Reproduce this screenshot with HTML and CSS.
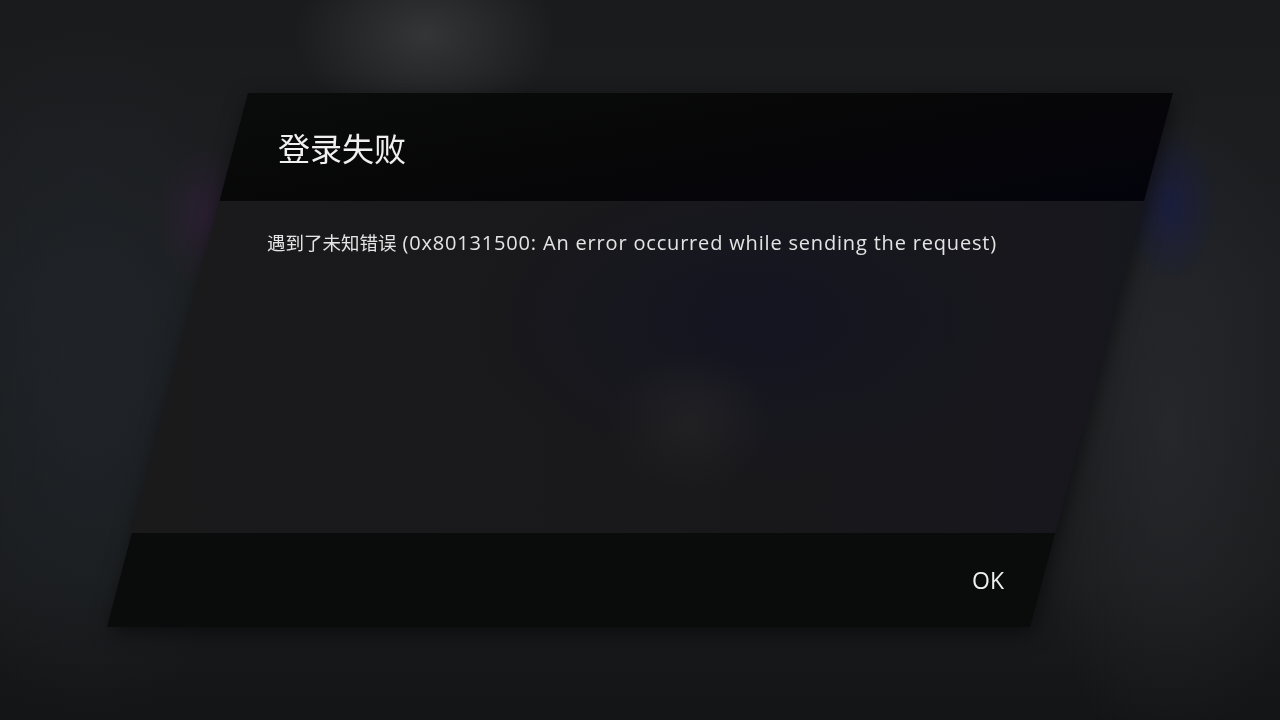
FILE: index.html
```html
<!DOCTYPE html>
<html lang="zh-CN">
<head>
    <meta charset="UTF-8">
    <meta name="viewport" content="width=device-width, initial-scale=1.0">
    <title>登录失败</title>
    <link rel="stylesheet" href="styles.css">
</head>
<body>
    <div class="scene">
        <!-- Error dialog -->
        <div class="dialog-wrap">
            <div class="dialog">
                <div class="dialog-header">
                    <h1 class="dialog-title">登录失败</h1>
                </div>
                <div class="dialog-body">
                    <p class="dialog-message">遇到了未知错误<span class="error-detail"> (0x80131500: An error occurred while sending the request)</span></p>
                </div>
                <div class="dialog-footer">
                    <button class="dialog-button">OK</button>
                </div>
            </div>
        </div>
    </div>
</body>
</html>
```

FILE: styles.css
```css
body {
    margin: 0;
    font-family: "Open Sans", "Noto Sans CJK SC", sans-serif;
    color: #ececec;
    background-color: #1a1c1f;
}

.scene {
    width: 1280px;
    height: 720px;
    overflow: hidden;
    background:
        radial-gradient(ellipse 130px 90px at 425px 35px, rgba(70, 70, 70, 0.6), rgba(70, 70, 70, 0) 100%),
        radial-gradient(ellipse 50px 70px at 205px 215px, rgba(60, 30, 70, 0.4), rgba(60, 30, 70, 0) 100%),
        radial-gradient(ellipse 50px 80px at 1170px 205px, rgba(20, 25, 90, 0.45), rgba(20, 25, 90, 0) 100%),
        radial-gradient(ellipse 140px 340px at 1170px 430px, rgba(46, 48, 52, 0.5), rgba(46, 48, 52, 0) 100%),
        radial-gradient(ellipse 160px 360px at 90px 380px, rgba(34, 39, 44, 0.6), rgba(34, 39, 44, 0) 100%),
        linear-gradient(180deg, #1a1b1d 0%, #1d1f22 40%, #1a1c1e 80%, #131415 100%);
}

.dialog-wrap {
    padding: 93px 0 0 107px;
    width: 1066px;
    filter: drop-shadow(2px 6px 10px rgba(0, 0, 0, 0.5));
}

.dialog {
    height: 534px;
    display: flex;
    flex-direction: column;
    clip-path: polygon(141px 0, 100% 0, calc(100% - 143px) 100%, 0 100%);
}

.dialog-header {
    height: 108px;
    display: flex;
    align-items: center;
    padding-left: 171px;
    background: linear-gradient(170deg, #0b0c0c 0%, #070708 50%, #03030c 100%);
}

.dialog-title {
    margin: 0;
    font-family: "Noto Sans CJK SC", sans-serif;
    font-size: 32px;
    font-weight: 400;
    color: #f0f0f0;
}

.dialog-body {
    flex: 1;
    padding: 27px 0 0 160px;
    background:
        radial-gradient(ellipse 80px 70px at 583px 220px, rgba(42, 42, 42, 0.5), rgba(42, 42, 42, 0) 100%),
        radial-gradient(ellipse 280px 160px at 640px 120px, rgba(18, 18, 38, 0.6), rgba(18, 18, 38, 0) 100%),
        linear-gradient(90deg, #1a1a1b 0%, #19191b 50%, #16161d 100%);
}

.dialog-message {
    margin: 0;
    font-family: "Noto Sans CJK SC", sans-serif;
    font-size: 18.5px;
    line-height: 28px;
    color: #e4e4e4;
}

.error-detail {
    font-family: "Open Sans", sans-serif;
    font-size: 20px;
    letter-spacing: 0.82px;
}

.dialog-footer {
    height: 94px;
    display: flex;
    align-items: center;
    justify-content: flex-end;
    padding-right: 169px;
    background-color: #0a0b0b;
}

.dialog-button {
    background: none;
    border: none;
    padding: 0;
    font-family: "Open Sans", sans-serif;
    font-size: 23px;
    color: #f0f0f0;
    cursor: pointer;
}
```
